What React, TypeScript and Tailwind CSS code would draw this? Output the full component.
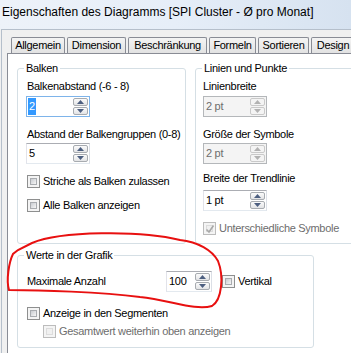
import React from 'react';

function Arrow({ up, disabled }: { up?: boolean; disabled?: boolean }) {
  const c = disabled ? '#b2b2b2' : '#4d5f80';
  return (
    <svg width="7" height="4" viewBox="0 0 7 4">
      <path d={up ? 'M0 4 L3.5 0 L7 4 Z' : 'M0 0 L3.5 4 L7 0 Z'} fill={c} />
    </svg>
  );
}

function SpinBtn({ up, disabled }: { up?: boolean; disabled?: boolean }) {
  return (
    <div
      className={`flex-1 flex items-center justify-center rounded-[2px] border ${
        disabled
          ? 'border-[#c9c9c9] bg-[#f4f4f4]'
          : 'border-[#a7abb0] bg-gradient-to-b from-[#fbfbfb] to-[#e3e4e6]'
      }`}
    >
      <Arrow up={up} disabled={disabled} />
    </div>
  );
}

function Spin({
  value,
  w = 'w-[64px]',
  disabled,
  selected,
  focused,
}: {
  value: string;
  w?: string;
  disabled?: boolean;
  selected?: boolean;
  focused?: boolean;
}) {
  return (
    <div
      className={`flex h-[21px] ${w} border ${
        focused
          ? 'border-[#7eb4ea]'
          : disabled
          ? 'border-[#b4b7ba]'
          : 'border-[#abadb3] border-r-[#dbdfe6] border-b-[#e3e9ef] border-l-[#e2e3ea]'
      } ${disabled ? 'bg-[#f4f4f4]' : 'bg-white'}`}
    >
      <div className={`flex-1 flex items-center pl-[1px] ${disabled ? 'text-[#6d6d6d]' : 'text-black'}`}>
        {selected ? <span className="bg-[#3399ff] text-white px-[1px]">{value}</span> : <span className="pl-[1px]">{value}</span>}
      </div>
      <div className="w-[17px] flex flex-col gap-[1px] p-[1px]">
        <SpinBtn up disabled={disabled} />
        <SpinBtn disabled={disabled} />
      </div>
    </div>
  );
}

function Check({ label, disabled, checked }: { label: string; disabled?: boolean; checked?: boolean }) {
  return (
    <div className="flex items-center gap-[3px] h-[13px]">
      <div
        className={`w-[13px] h-[13px] border p-[2px] relative ${
          disabled ? 'border-[#bcbcbc] bg-[#f4f4f4]' : 'border-[#8e8f8f] bg-[#f4f4f4]'
        }`}
      >
        <div
          className={`w-full h-full border ${
            disabled
              ? 'border-[#dcdcdc] bg-[#f0f0f0]'
              : 'border-[#a9acb0] bg-gradient-to-br from-[#c9ccd1] to-[#f6f6f6]'
          }`}
        />
        {checked && (
          <svg className="absolute left-[1px] top-[1px]" width="10" height="10" viewBox="0 0 10 10">
            <path d="M1.5 5.5 L4 8 L8.5 1.5" stroke="#a8a8a8" strokeWidth="1.6" fill="none" />
          </svg>
        )}
      </div>
      <span className={`leading-[13px] whitespace-nowrap ${disabled ? 'text-[#6d6d6d]' : 'text-black'}`}>{label}</span>
    </div>
  );
}

function Group({
  title,
  className,
  children,
}: {
  title: string;
  className: string;
  children: React.ReactNode;
}) {
  return (
    <div className={`relative border border-[#d5dfe5] rounded-[3px] shrink-0 ${className}`}>
      <span className="absolute -top-[7px] left-[6px] bg-white px-[2px] leading-[13px] whitespace-nowrap">
        {title}
      </span>
      {children}
    </div>
  );
}

const tabs: [string, string][] = [
  ['Allgemein', 'w-[54px]'],
  ['Dimension', 'w-[59px]'],
  ['Beschränkung', 'w-[79px]'],
  ['Formeln', 'w-[47px]'],
  ['Sortieren', 'w-[51px]'],
  ['Design', 'w-[44px]'],
];

export default function App() {
  return (
    <div className="relative w-[351px] h-[353px] overflow-hidden bg-[#f0f0f0] font-['Liberation_Sans',Arial,sans-serif] text-[11px] tracking-[-0.3px] text-black flex flex-col">
      {/* Titelleiste */}
      <div className="h-[29px] shrink-0 bg-gradient-to-r from-[#edf2f9] via-[#e6eef8] to-[#d6e2f0] pl-[2px] pt-[5px] text-[12px] leading-[15px] tracking-normal whitespace-nowrap">
        Eigenschaften des Diagramms [SPI Cluster - Ø pro Monat]
      </div>

      <div className="flex-1 flex flex-col ml-[1px] border-l border-t border-[#b5bfcb] bg-[#f0f0f0]">
        {/* Reiter */}
        <div className="flex gap-[2px] pl-[9px] pt-[7px] h-[23px] shrink-0 whitespace-nowrap">
          {tabs.map(([t, w]) => (
            <div
              key={t}
              className={`${w} shrink-0 h-[16px] border border-b-0 border-[#898c95] rounded-t-[2px] bg-gradient-to-b from-[#f4f4f4] to-[#e2e2e2] text-center leading-[15px]`}
            >
              {t}
            </div>
          ))}
        </div>

        {/* Inhalt */}
        <div className="flex-1 ml-[5px] border-l border-t border-[#898c95] bg-white pl-[9px] pt-[14px]">
          <div className="flex gap-[9px]">
            <Group title="Balken" className="w-[169px] h-[176px]">
              <div className="flex flex-col pl-[9px] pt-[11px]">
                <span className="leading-[13px]">Balkenabstand (-6 - 8)</span>
                <div className="mt-[3px] -ml-px">
                  <Spin value="2" selected focused />
                </div>
                <span className="leading-[13px] mt-[11px] whitespace-nowrap">Abstand der Balkengruppen (0-8)</span>
                <div className="mt-[2px] -ml-px">
                  <Spin value="5" />
                </div>
                <div className="mt-[11px]">
                  <Check label="Striche als Balken zulassen" />
                </div>
                <div className="mt-[11px]">
                  <Check label="Alle Balken anzeigen" />
                </div>
              </div>
            </Group>

            <Group title="Linien und Punkte" className="w-[170px] h-[176px]">
              <div className="flex flex-col pl-[7px] pt-[11px]">
                <span className="leading-[13px]">Linienbreite</span>
                <div className="mt-[3px]">
                  <Spin value="2 pt" disabled />
                </div>
                <span className="leading-[13px] mt-[11px]">Größe der Symbole</span>
                <div className="mt-[2px]">
                  <Spin value="2 pt" disabled />
                </div>
                <span className="leading-[13px] mt-[8px]">Breite der Trendlinie</span>
                <div className="mt-[5px]">
                  <Spin value="1 pt" />
                </div>
                <div className="mt-[11px]">
                  <Check label="Unterschiedliche Symbole" disabled checked />
                </div>
              </div>
            </Group>
          </div>

          <Group title="Werte in der Grafik" className="w-[297px] h-[93px] mt-[11px]">
            <div className="flex flex-col pl-[9px] pt-[15px]">
              <div className="flex items-center">
                <span className="w-[139px] leading-[13px]">Maximale Anzahl</span>
                <Spin value="100" w="w-[46px]" />
                <div className="ml-[10px]">
                  <Check label="Vertikal" />
                </div>
              </div>
              <div className="mt-[15px]">
                <Check label="Anzeige in den Segmenten" />
              </div>
              <div className="mt-[5px] ml-[16px]">
                <Check label="Gesamtwert weiterhin oben anzeigen" disabled />
              </div>
            </div>
          </Group>
        </div>
      </div>

      {/* rote Markierung */}
      <svg className="absolute left-0 top-0 pointer-events-none" width="351" height="353" viewBox="0 0 351 353">
        <path
          d="M180 240 C140 230, 60 231, 32 243 L18 250 L13 254 C9 262, 6 280, 9 290 C40 290, 100 292, 140 297 C170 300, 195 311, 212 306 C222 300, 224 276, 218 261 C212 250, 198 242, 180 240"
          stroke="#e81010"
          strokeWidth="2"
          fill="none"
          strokeLinecap="round"
        />
      </svg>
    </div>
  );
}
